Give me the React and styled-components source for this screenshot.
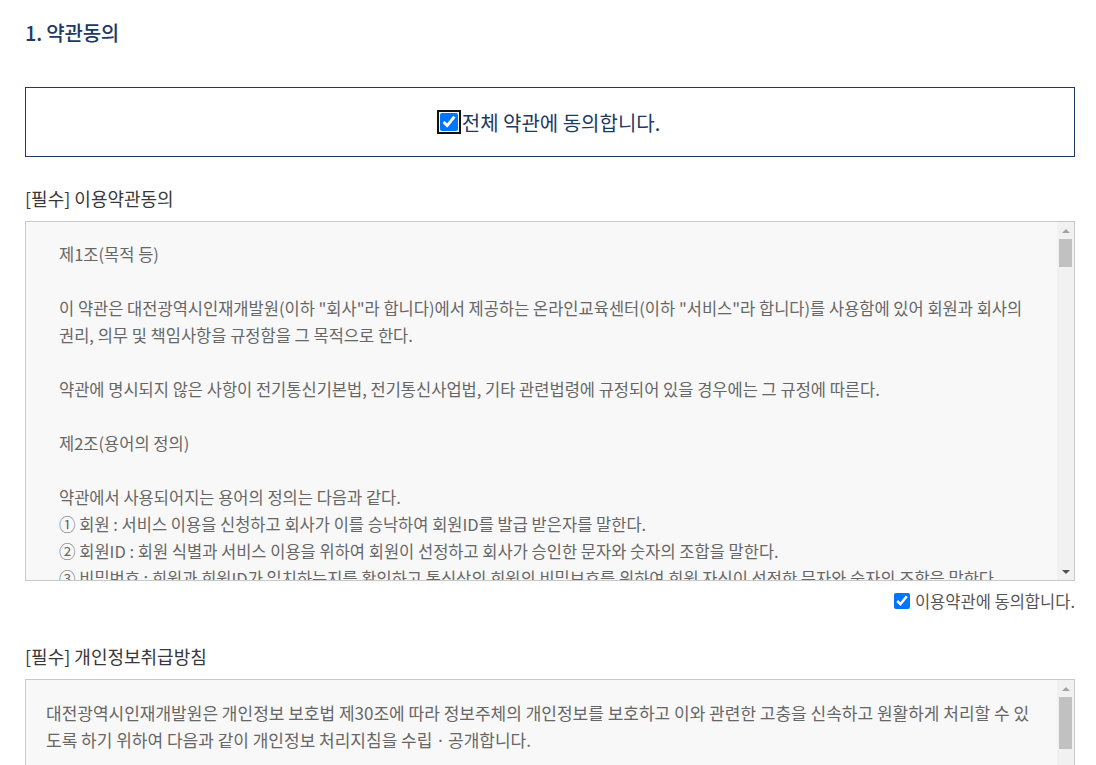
import React, { useEffect, useRef, useState } from "react";
import styled, { createGlobalStyle } from "styled-components";

const GlobalStyle = createGlobalStyle`
  html, body {
    margin: 0;
    padding: 0;
    background: #fff;
  }
  body {
    font-family: "Noto Sans CJK KR", "Noto Sans", sans-serif;
  }
`;

const TERMS = `제1조(목적 등)

이 약관은 대전광역시인재개발원(이하 "회사"라 합니다)에서 제공하는 온라인교육센터(이하 "서비스"라 합니다)를 사용함에 있어 회원과 회사의 권리, 의무 및 책임사항을 규정함을 그 목적으로 한다.

약관에 명시되지 않은 사항이 전기통신기본법, 전기통신사업법, 기타 관련법령에 규정되어 있을 경우에는 그 규정에 따른다.

제2조(용어의 정의)

약관에서 사용되어지는 용어의 정의는 다음과 같다.
① 회원 : 서비스 이용을 신청하고 회사가 이를 승낙하여 회원ID를 발급 받은자를 말한다.
② 회원ID : 회원 식별과 서비스 이용을 위하여 회원이 선정하고 회사가 승인한 문자와 숫자의 조합을 말한다.
③ 비밀번호 : 회원과 회원ID가 일치하는지를 확인하고 통신상의 회원의 비밀보호를 위하여 회원 자신이 선정한 문자와 숫자의 조합을 말한다.
④ 해지 : 회사 또는 회원이 서비스 이용 이후 그 이용계약을 종료시키는 의사표시를 말한다.

제3조(약관의 효력 및 변경)

① 이 약관은 서비스 화면에 게시하거나 기타의 방법으로 회원에게 공지함으로써 효력을 발생한다.
② 회사는 합리적인 사유가 발생할 경우에는 관련법령에 위배되지 않는 범위 안에서 이 약관을 변경할 수 있다.
③ 약관이 변경되는 경우에는 변경된 약관의 적용일자 및 변경사유를 명시하여 적용일자 7일 전부터 공지한다.
④ 회원은 변경된 약관에 동의하지 않을 경우 서비스 이용을 중단하고 탈퇴할 수 있다.
⑤ 변경된 약관의 효력 발생일 이후에도 서비스를 계속 이용할 경우 약관의 변경사항에 동의한 것으로 간주한다.

제4조(이용계약의 성립)

① 이용계약은 회원이 되고자 하는 자가 약관의 내용에 동의하고 회원가입 신청을 한 후 회사가 이를 승낙함으로써 성립한다.
② 회원가입 신청 시 "동의함" 버튼을 누르면 이 약관에 동의하는 것으로 간주한다.

제5조(이용신청)

① 회원가입은 회사가 정한 가입 양식에 따라 회원정보를 기입하여 신청한다.
② 회원은 회원가입 시 실명으로 신청하여야 하며, 허위의 정보를 기재한 경우 서비스 이용에 제한을 받을 수 있다.
③ 타인의 명의를 도용하여 이용신청을 한 회원의 모든 ID는 삭제되며, 관계법령에 따라 처벌을 받을 수 있다.

제6조(이용신청의 승낙)

① 회사는 제5조에 따른 이용신청에 대하여 특별한 사정이 없는 한 접수순서에 따라 이용신청을 승낙한다.
② 회사는 다음 각 호의 어느 하나에 해당하는 경우 이용신청에 대한 승낙을 유보하거나 거절할 수 있다.
1. 서비스 관련 설비에 여유가 없는 경우
2. 기술상 지장이 있는 경우
3. 기타 회사가 필요하다고 인정되는 경우
③ 회사는 다음 각 호의 어느 하나에 해당하는 이용신청에 대하여는 이를 승낙하지 아니할 수 있다.
1. 다른 사람의 명의를 사용하여 신청한 경우
2. 이용신청 시 회원정보를 허위로 기재하여 신청한 경우
3. 사회의 안녕질서 또는 미풍양속을 저해할 목적으로 신청한 경우
4. 기타 회사가 정한 이용신청 요건이 미비한 경우

제7조(계약사항의 변경)

회원은 개인정보관리를 통해 언제든지 본인의 개인정보를 열람하고 수정할 수 있다. 회원은 이용신청 시 기재한 사항이 변경되었을 경우에는 온라인으로 수정을 하여야 하며, 수정하지 않아 발생하는 문제의 책임은 회원에게 있다.

제8조(회사의 의무)

① 회사는 관련법령과 이 약관이 금지하거나 미풍양속에 반하는 행위를 하지 않으며, 지속적이고 안정적으로 서비스를 제공하기 위하여 노력한다.
② 회사는 회원이 안전하게 서비스를 이용할 수 있도록 개인정보 보호를 위한 보안시스템을 갖추어야 한다.
③ 회사는 서비스 이용과 관련하여 회원으로부터 제기된 의견이나 불만이 정당하다고 인정할 경우에는 이를 처리하여야 한다.
④ 회사는 회원의 개인정보를 본인의 승낙 없이 제3자에게 누설, 배포하지 않는다. 다만, 관계법령에 의한 관계기관의 요청이 있는 경우에는 그러하지 아니하다.

제9조(회원의 의무)

① 회원은 관계법령, 이 약관의 규정, 이용안내 및 서비스상에 공지한 주의사항 등을 준수하여야 한다.
② 회원은 회원ID와 비밀번호를 관리할 책임이 있으며, 이를 제3자에게 이용하게 하여서는 아니 된다.
③ 회원은 회원ID 및 비밀번호가 도용되거나 제3자가 사용하고 있음을 인지한 경우에는 즉시 회사에 통보하여야 한다.
④ 회원은 다음 각 호의 행위를 하여서는 아니 된다.
1. 다른 회원의 회원ID를 부정하게 사용하는 행위
2. 서비스에서 얻은 정보를 회사의 사전승낙 없이 복제하거나 출판 및 방송 등에 사용하는 행위
3. 회사 또는 제3자의 저작권 등 기타 권리를 침해하는 행위
4. 공공질서 및 미풍양속에 위반되는 내용의 정보를 타인에게 유포하는 행위
5. 범죄와 결부된다고 객관적으로 판단되는 행위
6. 기타 관계법령에 위배되는 행위

제10조(서비스의 제공 및 변경)

① 회사는 회원에게 온라인 교육과정, 학습자료 제공, 학습이력 관리 등의 서비스를 제공한다.
② 회사는 필요한 경우 서비스의 내용을 변경할 수 있으며, 이 경우 변경된 내용과 적용일자를 명시하여 사전에 공지한다.

제11조(서비스 이용시간)

① 서비스의 이용은 업무상 또는 기술상 특별한 지장이 없는 한 연중무휴 1일 24시간을 원칙으로 한다.
② 회사는 시스템 정기점검, 증설 및 교체를 위해 회사가 정한 날이나 시간에 서비스를 일시 중단할 수 있으며, 이 경우 사전에 공지한다.

제12조(서비스 이용의 제한 및 중지)

① 회사는 다음 각 호의 어느 하나에 해당하는 경우에는 서비스 이용을 제한하거나 중지할 수 있다.
1. 서비스용 설비의 보수 등 공사로 인한 부득이한 경우
2. 전기통신사업법에 규정된 기간통신사업자가 전기통신 서비스를 중지했을 경우
3. 국가비상사태, 정전, 서비스 설비의 장애 또는 서비스 이용의 폭주 등으로 정상적인 서비스 이용에 지장이 있는 경우
4. 기타 중대한 사유로 인하여 회사가 서비스 제공을 지속하는 것이 부적당하다고 인정하는 경우
② 회사는 제1항의 규정에 의하여 서비스의 이용을 제한하거나 중지한 때에는 그 사유 및 제한기간 등을 회원에게 알려야 한다.

제13조(게시물의 관리)

① 회사는 회원이 게시하거나 등록하는 서비스 내의 내용물이 다음 각 호의 어느 하나에 해당한다고 판단되는 경우에는 사전통지 없이 삭제할 수 있다.
1. 다른 회원 또는 제3자를 비방하거나 중상모략으로 명예를 손상시키는 내용인 경우
2. 공공질서 및 미풍양속에 위반되는 내용인 경우
3. 범죄적 행위에 결부된다고 인정되는 내용인 경우
4. 회사의 저작권, 제3자의 저작권 등 기타 권리를 침해하는 내용인 경우
5. 회사에서 규정한 게시기간을 초과한 경우
6. 기타 관계법령에 위반된다고 판단되는 경우
② 회사는 게시물에 관련된 세부 이용지침을 별도로 정하여 시행할 수 있으며, 회원은 그 지침에 따라 각종 게시물을 등록하거나 삭제하여야 한다.

제14조(게시물의 저작권)

① 회원이 서비스 내에 게시한 게시물의 저작권은 게시한 회원에게 귀속된다.
② 회사가 작성한 저작물에 대한 저작권 및 기타 지적재산권은 회사에 귀속된다.
③ 회원은 서비스를 이용하여 얻은 정보를 회사의 사전승낙 없이 복제, 전송, 출판, 배포, 방송 기타 방법에 의하여 영리목적으로 이용하거나 제3자에게 이용하게 하여서는 아니 된다.
④ 회사는 회원이 게시하거나 등록하는 서비스 내의 게시물을 서비스 운영, 홍보 등의 목적으로 사용할 수 있다.

제15조(교육과정의 수강)

① 회원은 회사가 개설한 교육과정 중 수강자격 요건을 충족하는 과정에 한하여 수강신청을 할 수 있다.
② 수강신청은 교육과정별 신청기간 내에 하여야 하며, 회사는 수강인원 및 자격요건 등을 고려하여 수강 승인 여부를 결정한다.
③ 회원은 교육기간 내에 학습을 완료하여야 하며, 교육기간이 경과한 경우에는 학습을 계속할 수 없다.
④ 수료기준은 교육과정별로 회사가 정한 기준에 따르며, 수료기준을 충족한 회원에게는 수료증을 발급한다.

제16조(학습 부정행위의 금지)

① 회원은 대리수강, 대리시험, 학습진도의 부정한 조작 등 학습과 관련한 부정행위를 하여서는 아니 된다.
② 회사는 부정행위가 확인된 경우 해당 교육과정의 수료를 취소하고 일정기간 수강을 제한할 수 있다.

제17조(계약해지 및 이용제한)

① 회원이 이용계약을 해지하고자 하는 때에는 회원 본인이 온라인을 통해 회사에 해지신청을 하여야 한다.
② 회사는 회원이 제9조에 규정한 회원의 의무를 이행하지 않을 경우 사전통지 없이 이용계약을 해지하거나 서비스 이용을 중지할 수 있다.
③ 회사는 회원이 1년 이상 서비스를 이용하지 않은 경우 회원에게 사전 통지 후 회원정보를 분리 보관하거나 파기할 수 있다.

제18조(손해배상)

회사는 무료로 제공되는 서비스와 관련하여 회원에게 어떠한 손해가 발생하더라도 회사가 고의로 행한 범죄행위를 제외하고는 이에 대하여 책임을 부담하지 아니한다.

제19조(면책조항)

① 회사는 천재지변 또는 이에 준하는 불가항력으로 인하여 서비스를 제공할 수 없는 경우에는 서비스 제공에 관한 책임이 면제된다.
② 회사는 회원의 귀책사유로 인한 서비스 이용의 장애에 대하여 책임을 지지 않는다.
③ 회사는 회원이 서비스를 이용하여 기대하는 수익을 상실한 것에 대하여 책임을 지지 않으며, 그 밖에 서비스를 통하여 얻은 자료로 인한 손해에 관하여 책임을 지지 않는다.
④ 회사는 회원이 서비스에 게재한 정보, 자료, 사실의 신뢰도, 정확성 등 내용에 관하여는 책임을 지지 않는다.
⑤ 회사는 서비스 이용과 관련하여 회원에게 발생한 손해 가운데 회원의 고의 또는 과실로 인한 손해에 대하여 책임을 지지 않는다.

제20조(관할법원)

서비스 이용으로 발생한 분쟁에 대해 소송이 제기될 경우 회사의 소재지를 관할하는 법원을 전속 관할법원으로 한다.

부칙

① 이 약관은 2019년 1월 1일부터 시행한다.
② 이 약관 시행 이전에 가입한 회원에 대하여도 이 약관을 적용한다.`;

const PRIVACY = `대전광역시인재개발원은 개인정보 보호법 제30조에 따라 정보주체의 개인정보를 보호하고 이와 관련한 고충을 신속하고 원활하게 처리할 수 있도록 하기 위하여 다음과 같이 개인정보 처리지침을 수립ㆍ공개합니다.

제1조(개인정보의 처리목적)

대전광역시인재개발원은 다음의 목적을 위하여 개인정보를 처리합니다. 처리하고 있는 개인정보는 다음의 목적 이외의 용도로는 이용되지 않으며, 이용 목적이 변경되는 경우에는 개인정보 보호법 제18조에 따라 별도의 동의를 받는 등 필요한 조치를 이행할 예정입니다.
1. 회원 가입 및 관리
회원 가입의사 확인, 회원제 서비스 제공에 따른 본인 식별ㆍ인증, 회원자격 유지ㆍ관리, 서비스 부정이용 방지, 각종 고지ㆍ통지 목적으로 개인정보를 처리합니다.
2. 교육과정 운영
교육신청 접수, 교육생 선발, 수강이력 관리, 수료증 발급, 교육 만족도 조사 목적으로 개인정보를 처리합니다.
3. 민원사무 처리
민원인의 신원 확인, 민원사항 확인, 사실조사를 위한 연락ㆍ통지, 처리결과 통보 목적으로 개인정보를 처리합니다.

제2조(개인정보의 처리 및 보유기간)

① 대전광역시인재개발원은 법령에 따른 개인정보 보유ㆍ이용기간 또는 정보주체로부터 개인정보를 수집 시에 동의받은 개인정보 보유ㆍ이용기간 내에서 개인정보를 처리ㆍ보유합니다.
② 각각의 개인정보 처리 및 보유 기간은 다음과 같습니다.
1. 회원 가입 및 관리 : 회원 탈퇴 시까지
2. 교육과정 운영 : 교육 종료 후 5년
3. 민원사무 처리 : 민원처리 종료 후 3년

제3조(개인정보의 제3자 제공)

대전광역시인재개발원은 정보주체의 개인정보를 제1조에서 명시한 범위 내에서만 처리하며, 정보주체의 동의, 법률의 특별한 규정 등 개인정보 보호법 제17조 및 제18조에 해당하는 경우에만 개인정보를 제3자에게 제공합니다.

제4조(개인정보처리의 위탁)

① 대전광역시인재개발원은 원활한 개인정보 업무처리를 위하여 다음과 같이 개인정보 처리업무를 위탁하고 있습니다.
1. 위탁받는 자(수탁자) : 온라인교육센터 유지관리 업체
2. 위탁하는 업무의 내용 : 홈페이지 및 학습관리시스템 유지보수
② 위탁계약 체결 시 개인정보 보호법 제26조에 따라 위탁업무 수행목적 외 개인정보 처리금지, 기술적ㆍ관리적 보호조치, 재위탁 제한, 수탁자에 대한 관리ㆍ감독, 손해배상 등 책임에 관한 사항을 계약서 등 문서에 명시하고, 수탁자가 개인정보를 안전하게 처리하는지를 감독하고 있습니다.

제5조(정보주체의 권리ㆍ의무 및 행사방법)

① 정보주체는 대전광역시인재개발원에 대해 언제든지 개인정보 열람, 정정ㆍ삭제, 처리정지 요구 등의 권리를 행사할 수 있습니다.
② 제1항에 따른 권리 행사는 서면, 전자우편 등을 통하여 하실 수 있으며 지체 없이 조치하겠습니다.
③ 제1항에 따른 권리 행사는 정보주체의 법정대리인이나 위임을 받은 자 등 대리인을 통하여 하실 수 있습니다.

제6조(처리하는 개인정보 항목)

대전광역시인재개발원은 다음의 개인정보 항목을 처리하고 있습니다.
1. 필수항목 : 성명, 생년월일, 아이디, 비밀번호, 휴대전화번호, 이메일, 소속기관
2. 선택항목 : 직급, 직렬, 자택전화번호
3. 자동수집항목 : 접속 IP 정보, 쿠키, 서비스 이용기록, 접속 로그

제7조(개인정보의 파기)

① 대전광역시인재개발원은 개인정보 보유기간의 경과, 처리목적 달성 등 개인정보가 불필요하게 되었을 때에는 지체없이 해당 개인정보를 파기합니다.
② 전자적 파일 형태의 정보는 기록을 재생할 수 없는 기술적 방법을 사용하여 삭제하며, 종이에 출력된 개인정보는 분쇄기로 분쇄하거나 소각합니다.

제8조(개인정보의 안전성 확보조치)

대전광역시인재개발원은 개인정보의 안전성 확보를 위해 다음과 같은 조치를 취하고 있습니다.
1. 관리적 조치 : 내부관리계획 수립ㆍ시행, 정기적 직원 교육
2. 기술적 조치 : 개인정보처리시스템 등의 접근권한 관리, 접근통제시스템 설치, 고유식별정보 등의 암호화, 보안프로그램 설치
3. 물리적 조치 : 전산실, 자료보관실 등의 접근통제

제9조(개인정보 보호책임자)

대전광역시인재개발원은 개인정보 처리에 관한 업무를 총괄해서 책임지고, 개인정보 처리와 관련한 정보주체의 불만처리 및 피해구제 등을 위하여 개인정보 보호책임자를 지정하고 있습니다.

제10조(권익침해 구제방법)

정보주체는 개인정보침해로 인한 구제를 받기 위하여 개인정보분쟁조정위원회, 한국인터넷진흥원 개인정보침해신고센터 등에 분쟁해결이나 상담 등을 신청할 수 있습니다.
1. 개인정보분쟁조정위원회 : 1833-6972
2. 개인정보침해신고센터 : 118
3. 대검찰청 : 1301
4. 경찰청 : 182

제11조(개인정보 처리지침의 변경)

이 개인정보 처리지침은 시행일로부터 적용되며, 법령 및 방침에 따른 변경내용의 추가, 삭제 및 정정이 있는 경우에는 변경사항의 시행 7일 전부터 공지사항을 통하여 고지할 것입니다.`;

const ARROW = 17;

const ScrollText = ({ value, padX, fontSize }) => {
  const ref = useRef(null);
  const [bar, setBar] = useState({ top: 0, size: 0 });

  const measure = () => {
    const el = ref.current;
    if (!el) return;
    const track = el.clientHeight - ARROW * 2;
    const size = Math.max(18, Math.round((track * el.clientHeight) / el.scrollHeight));
    const max = el.scrollHeight - el.clientHeight;
    const top = max > 0 ? Math.round(((track - size) * el.scrollTop) / max) : 0;
    setBar({ top, size });
  };

  useEffect(() => {
    measure();
    window.addEventListener("resize", measure);
    return () => window.removeEventListener("resize", measure);
  }, [value]);

  const step = (dir) => {
    if (ref.current) ref.current.scrollTop += dir * 40;
  };

  return (
    <TextFrame>
      <TermsText
        ref={ref}
        readOnly
        value={value}
        $padX={padX}
        $fontSize={fontSize}
        onScroll={measure}
      />
      <ScrollBar>
        <ArrowButton type="button" onClick={() => step(-1)}>
          <Triangle $up $dim={bar.top === 0} />
        </ArrowButton>
        <Track>
          <Thumb style={{ top: bar.top, height: bar.size }} />
        </Track>
        <ArrowButton type="button" onClick={() => step(1)}>
          <Triangle />
        </ArrowButton>
      </ScrollBar>
    </TextFrame>
  );
};

const App = () => {
  const [terms, setTerms] = useState(true);
  const [privacy, setPrivacy] = useState(false);
  const [all, setAll] = useState(true);

  const toggleAll = () => {
    const next = !all;
    setAll(next);
    setTerms(next);
    setPrivacy(next);
  };

  return (
    <>
      <GlobalStyle />
      <Page>
        <Title>1. 약관동의</Title>

        <AllAgreeBox>
          <AllLabel>
            <BigCheck type="checkbox" checked={all} onChange={toggleAll} />
            전체 약관에 동의합니다.
          </AllLabel>
        </AllAgreeBox>

        <Section>
          <SectionTitle>[필수] 이용약관동의</SectionTitle>
          <ScrollText value={TERMS} padX={33} fontSize={16.5} />
          <AgreeRow>
            <SmallLabel>
              <SmallCheck
                type="checkbox"
                checked={terms}
                onChange={() => setTerms(!terms)}
              />
              이용약관에 동의합니다.
            </SmallLabel>
          </AgreeRow>
        </Section>

        <Section $gap={31}>
          <SectionTitle>[필수] 개인정보취급방침</SectionTitle>
          <ScrollText value={PRIVACY} padX={20} fontSize={17} />
          <AgreeRow>
            <SmallLabel>
              <SmallCheck
                type="checkbox"
                checked={privacy}
                onChange={() => setPrivacy(!privacy)}
              />
              개인정보취급방침에 동의합니다.
            </SmallLabel>
          </AgreeRow>
        </Section>
      </Page>
    </>
  );
};

export default App;

const Page = styled.div`
  width: 1050px;
  padding: 19px 25px 40px;
`;

const Title = styled.h2`
  margin: 0;
  font-size: 20px;
  font-weight: 500;
  line-height: 28px;
  color: #1d3a64;
  letter-spacing: -0.2px;
`;

const AllAgreeBox = styled.div`
  margin-top: 40px;
  height: 68px;
  border: 1px solid #1d3a64;
  display: flex;
  align-items: center;
  justify-content: center;
`;

const AllLabel = styled.label`
  display: flex;
  align-items: center;
  font-size: 20px;
  color: #1d3a64;
  cursor: pointer;
`;

const BigCheck = styled.input`
  width: 18px;
  height: 18px;
  margin: 0 4px 0 0;
  outline: 2px solid #111;
  outline-offset: 1px;
  border-radius: 3px;
  accent-color: #0075ff;
`;

const Section = styled.section`
  margin-top: ${(p) => p.$gap ?? 29}px;
`;

const SectionTitle = styled.h3`
  margin: 0 0 11px;
  font-size: 18px;
  font-weight: 400;
  line-height: 24px;
  color: #383838;
`;

const TextFrame = styled.div`
  position: relative;
  height: 360px;
`;

const TermsText = styled.textarea`
  display: block;
  box-sizing: border-box;
  width: 100%;
  height: 100%;
  margin: 0;
  padding: 19px ${(p) => p.$padX + ARROW}px 19px ${(p) => p.$padX}px;
  border: 1px solid #c9c9c9;
  border-radius: 0;
  background: #f8f8f8;
  color: #666;
  font-family: "Noto Sans CJK KR", "Noto Sans", sans-serif;
  font-size: ${(p) => p.$fontSize}px;
  line-height: 27px;
  resize: none;
  overflow-y: scroll;
  outline: none;
  scrollbar-width: none;

  &::-webkit-scrollbar {
    display: none;
  }
`;

const ScrollBar = styled.div`
  position: absolute;
  top: 1px;
  right: 1px;
  bottom: 1px;
  width: ${ARROW}px;
  display: flex;
  flex-direction: column;
  background: #f1f1f1;
`;

const ArrowButton = styled.button`
  flex: none;
  height: ${ARROW}px;
  padding: 0;
  border: 0;
  background: #f1f1f1;
  display: flex;
  align-items: center;
  justify-content: center;
  cursor: default;
`;

const Triangle = styled.span`
  width: 0;
  height: 0;
  border-left: 4px solid transparent;
  border-right: 4px solid transparent;
  ${(p) =>
    p.$up
      ? `border-bottom: 4px solid ${p.$dim ? "#a3a3a3" : "#505050"};`
      : `border-top: 4px solid #505050;`}
`;

const Track = styled.div`
  position: relative;
  flex: 1;
`;

const Thumb = styled.div`
  position: absolute;
  left: 2px;
  right: 2px;
  background: #c1c1c1;
`;

const AgreeRow = styled.div`
  display: flex;
  justify-content: flex-end;
  margin-top: 8px;
`;

const SmallLabel = styled.label`
  display: flex;
  align-items: center;
  gap: 5px;
  font-size: 16.5px;
  color: #555;
  cursor: pointer;
  line-height: 24px;
`;

const SmallCheck = styled.input`
  width: 16px;
  height: 16px;
  margin: 0;
  accent-color: #0075ff;
`;
